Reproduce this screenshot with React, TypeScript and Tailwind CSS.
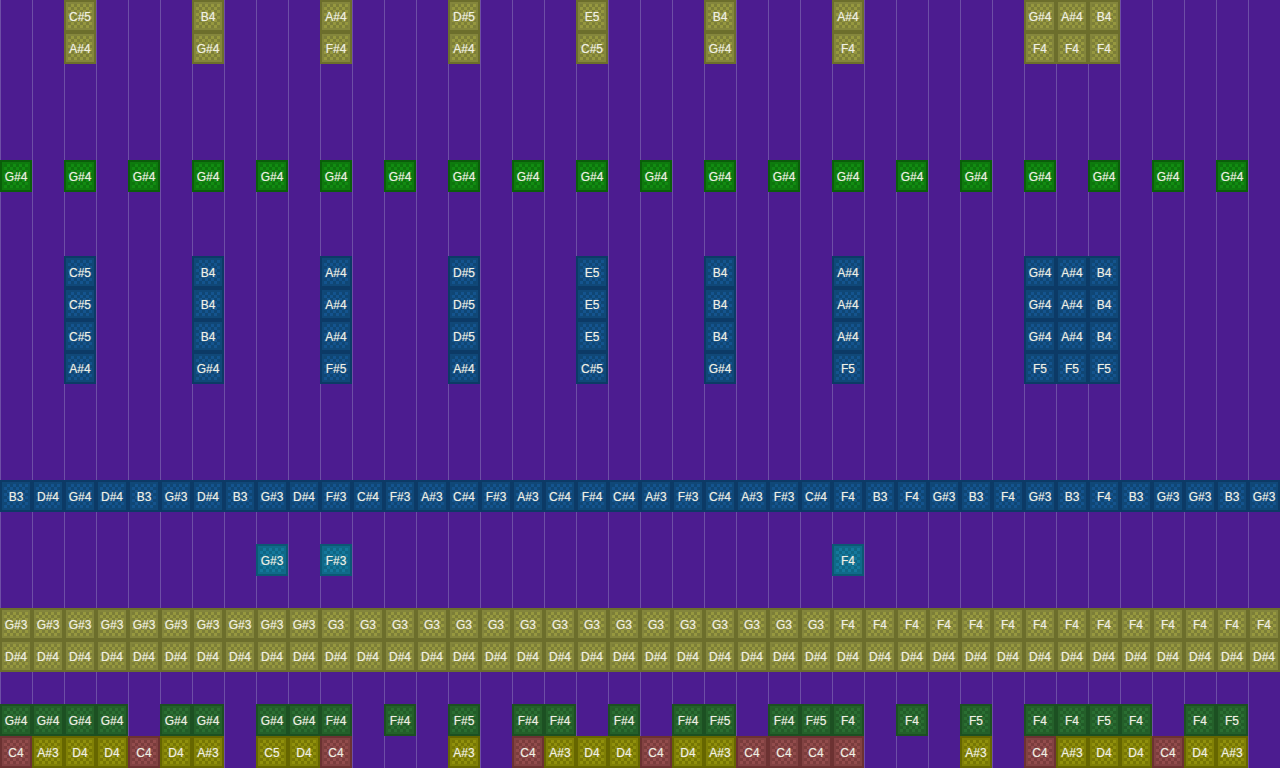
const cols = 40;

type Tone = 'olive' | 'green' | 'blue' | 'teal' | 'forest' | 'red' | 'yellow';

const toneClass: Record<Tone, { frame: string; fill: string }> = {
  olive: { frame: 'border-[#6c6e2c] bg-[#84863c]', fill: 'bg-[conic-gradient(#96983f_25%,#7c7e38_0_50%,#96983f_0_75%,#7c7e38_0)]' },
  green: { frame: 'border-[#0a5e0a] bg-[#0e7a0e]', fill: 'bg-[conic-gradient(#128c12_25%,#0d740d_0_50%,#128c12_0_75%,#0d740d_0)]' },
  blue: { frame: 'border-[#0c3a66] bg-[#104878]', fill: 'bg-[conic-gradient(#14548e_25%,#0f4674_0_50%,#14548e_0_75%,#0f4674_0)]' },
  teal: { frame: 'border-[#0c5874] bg-[#106a8a]', fill: 'bg-[conic-gradient(#14789c_25%,#0f6684_0_50%,#14789c_0_75%,#0f6684_0)]' },
  forest: { frame: 'border-[#1c5022] bg-[#24602a]', fill: 'bg-[conic-gradient(#2a6e32_25%,#225c28_0_50%,#2a6e32_0_75%,#225c28_0)]' },
  red: { frame: 'border-[#6c3232] bg-[#824242]', fill: 'bg-[conic-gradient(#924c4c_25%,#7a3c3c_0_50%,#924c4c_0_75%,#7a3c3c_0)]' },
  yellow: { frame: 'border-[#666600] bg-[#808006]', fill: 'bg-[conic-gradient(#90900c_25%,#767604_0_50%,#90900c_0_75%,#767604_0)]' },
};

// [row, tone, { column: note }]
const sparse: [number, Tone, Record<number, string>][] = [
  [0, 'olive', { 2: 'C#5', 6: 'B4', 10: 'A#4', 14: 'D#5', 18: 'E5', 22: 'B4', 26: 'A#4', 32: 'G#4', 33: 'A#4', 34: 'B4' }],
  [1, 'olive', { 2: 'A#4', 6: 'G#4', 10: 'F#4', 14: 'A#4', 18: 'C#5', 22: 'G#4', 26: 'F4', 32: 'F4', 33: 'F4', 34: 'F4' }],
  [8, 'blue', { 2: 'C#5', 6: 'B4', 10: 'A#4', 14: 'D#5', 18: 'E5', 22: 'B4', 26: 'A#4', 32: 'G#4', 33: 'A#4', 34: 'B4' }],
  [9, 'blue', { 2: 'C#5', 6: 'B4', 10: 'A#4', 14: 'D#5', 18: 'E5', 22: 'B4', 26: 'A#4', 32: 'G#4', 33: 'A#4', 34: 'B4' }],
  [10, 'blue', { 2: 'C#5', 6: 'B4', 10: 'A#4', 14: 'D#5', 18: 'E5', 22: 'B4', 26: 'A#4', 32: 'G#4', 33: 'A#4', 34: 'B4' }],
  [11, 'blue', { 2: 'A#4', 6: 'G#4', 10: 'F#5', 14: 'A#4', 18: 'C#5', 22: 'G#4', 26: 'F5', 32: 'F5', 33: 'F5', 34: 'F5' }],
  [17, 'teal', { 8: 'G#3', 10: 'F#3', 26: 'F4' }],
  [22, 'forest', {
    0: 'G#4', 1: 'G#4', 2: 'G#4', 3: 'G#4', 5: 'G#4', 6: 'G#4', 8: 'G#4', 9: 'G#4', 10: 'F#4', 12: 'F#4', 14: 'F#5',
    16: 'F#4', 17: 'F#4', 19: 'F#4', 21: 'F#4', 22: 'F#5', 24: 'F#4', 25: 'F#5', 26: 'F4', 28: 'F4', 30: 'F5',
    32: 'F4', 33: 'F4', 34: 'F5', 35: 'F4', 37: 'F4', 38: 'F5',
  }],
];

const greenCols = [0, 2, 4, 6, 8, 10, 12, 14, 16, 18, 20, 22, 24, 26, 28, 30, 32, 34, 36, 38];

const row15 = 'B3 D#4 G#4 D#4 B3 G#3 D#4 B3 G#3 D#4 F#3 C#4 F#3 A#3 C#4 F#3 A#3 C#4 F#4 C#4 A#3 F#3 C#4 A#3 F#3 C#4 F4 B3 F4 G#3 B3 F4 G#3 B3 F4 B3 G#3 G#3 B3 G#3'.split(' ');
const row19 = Array.from({ length: cols }, (_, i) => (i < 10 ? 'G#3' : i < 26 ? 'G3' : 'F4'));

const row23: [number, Tone, string][] = [
  [0, 'red', 'C4'], [1, 'yellow', 'A#3'], [2, 'yellow', 'D4'], [3, 'yellow', 'D4'], [4, 'red', 'C4'], [5, 'yellow', 'D4'], [6, 'yellow', 'A#3'],
  [8, 'yellow', 'C5'], [9, 'yellow', 'D4'], [10, 'red', 'C4'], [14, 'yellow', 'A#3'], [16, 'red', 'C4'], [17, 'yellow', 'A#3'], [18, 'yellow', 'D4'],
  [19, 'yellow', 'D4'], [20, 'red', 'C4'], [21, 'yellow', 'D4'], [22, 'yellow', 'A#3'], [23, 'red', 'C4'], [24, 'red', 'C4'], [25, 'red', 'C4'], [26, 'red', 'C4'],
  [30, 'yellow', 'A#3'], [32, 'red', 'C4'], [33, 'yellow', 'A#3'], [34, 'yellow', 'D4'], [35, 'yellow', 'D4'], [36, 'red', 'C4'], [37, 'yellow', 'D4'], [38, 'yellow', 'A#3'],
];

type Note = { col: number; row: number; tone: Tone; label: string };

const notes: Note[] = [
  ...sparse.flatMap(([row, tone, m]) =>
    Object.entries(m).map(([c, label]) => ({ col: Number(c), row, tone, label }))),
  ...greenCols.map(col => ({ col, row: 5, tone: 'green' as Tone, label: 'G#4' })),
  ...row15.map((label, col) => ({ col, row: 15, tone: 'blue' as Tone, label })),
  ...row19.map((label, col) => ({ col, row: 19, tone: 'olive' as Tone, label })),
  ...row19.map((_, col) => ({ col, row: 20, tone: 'olive' as Tone, label: 'D#4' })),
  ...row23.map(([col, tone, label]) => ({ col, row: 23, tone, label })),
];

function Tile({ note }: { note: Note }) {
  const tone = toneClass[note.tone];
  return (
    <div
      className={`border-2 p-[2px] ${tone.frame}`}
      style={{ gridColumn: note.col + 1, gridRow: note.row + 1 }}
    >
      <div className={`flex h-full items-center justify-center whitespace-nowrap bg-size-[6px_6px] pt-[2px] font-['Liberation_Sans',sans-serif] text-[12px] text-[#f0f0e4] [text-shadow:0_0_1px_#f0f0e480] ${tone.fill}`}>
        {note.label}
      </div>
    </div>
  );
}

export default function App() {
  return (
    <div className="grid h-[768px] w-[1280px] grid-cols-[repeat(40,32px)] grid-rows-[repeat(24,32px)] overflow-hidden bg-[#4c1c90] bg-[linear-gradient(to_right,#6e4ea6_1px,transparent_1px)] bg-size-[32px_32px]">
      {notes.map(n => (
        <Tile key={`${n.row}-${n.col}`} note={n} />
      ))}
    </div>
  );
}
